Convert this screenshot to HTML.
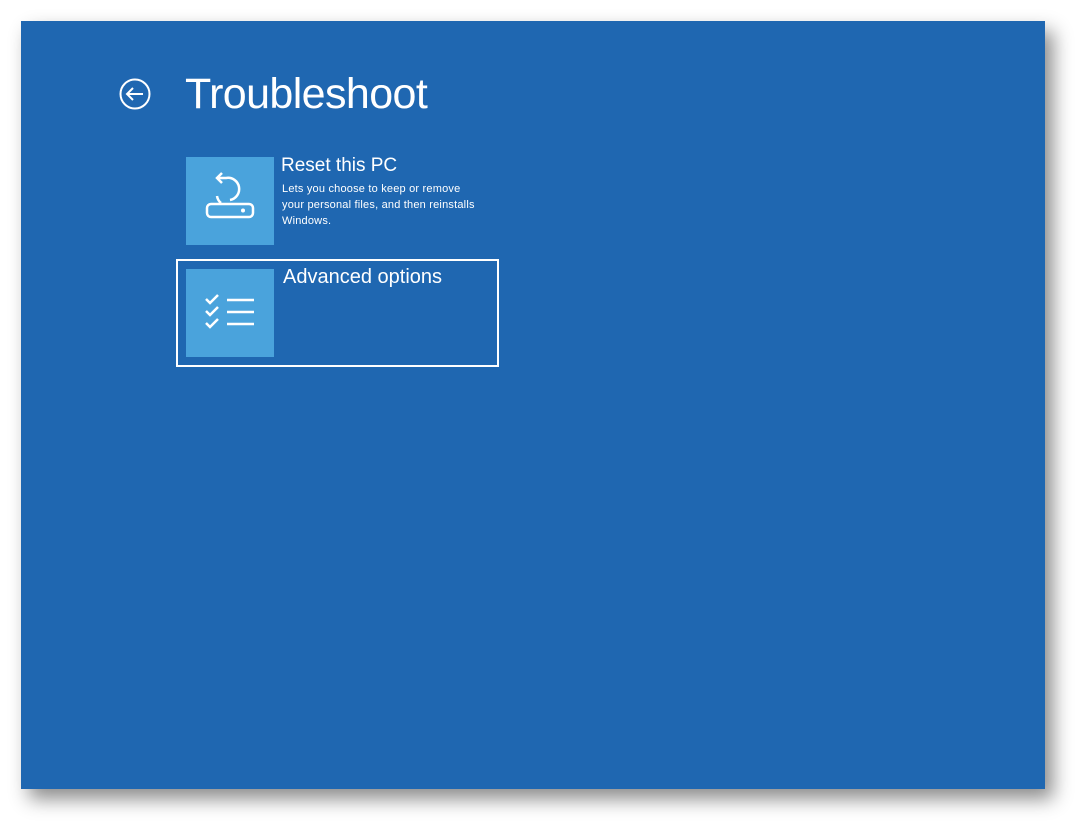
<!DOCTYPE html>
<html><head><style>
html,body{margin:0;padding:0;background:#fff;width:1087px;height:831px;overflow:hidden;font-family:"Liberation Sans",sans-serif;}
.panel{position:absolute;left:21px;top:21px;width:1024px;height:768px;background:#1f67b1;box-shadow:8px 10px 18px rgba(0,0,0,0.45);}
.t{position:absolute;color:#fff;white-space:nowrap;}
.tile{position:absolute;width:88px;height:88px;background:#4aa3dc;}
</style></head><body>
<div class="panel"></div>
<svg style="position:absolute;left:118px;top:77px" width="34" height="34" viewBox="0 0 34 34"><circle cx="17" cy="17" r="14.5" fill="none" stroke="#fff" stroke-width="2"/><path d="M25 17H9M15 11l-6 6 6 6" fill="none" stroke="#fff" stroke-width="2"/></svg>
<div class="t" style="left:185px;top:70px;font-size:43px;letter-spacing:-0.6px;">Troubleshoot</div>
<div class="tile" style="left:186px;top:157px"><svg width="88" height="88" viewBox="0 0 88 88"><g fill="none" stroke="#fff" stroke-width="2.5"><rect x="21" y="47" width="46" height="13" rx="4"/><path d="M31 21H40A11 11 0 0 1 44 43M36 16L31 21L36 26M31 39A11 11 0 0 0 35 46"/></g><circle cx="57" cy="53.5" r="2" fill="#fff"/></svg></div>
<div class="t" style="left:281px;top:155px;font-size:19px;">Reset this PC</div>
<div class="t" style="left:282px;top:181px;font-size:11px;line-height:16px;letter-spacing:0.2px;">Lets you choose to keep or remove<br>your personal files, and then reinstalls<br>Windows.</div>
<div style="position:absolute;left:176px;top:259px;width:319px;height:104px;border:2px solid #fff;"></div>
<div class="tile" style="left:186px;top:269px"><svg width="88" height="88" viewBox="0 0 88 88"><g fill="none" stroke="#fff" stroke-width="2.5"><path d="M20 30l4 4 8-8M20 42l4 4 8-8M20 54l4 4 8-8"/><path d="M41 31h27M41 43h27M41 55h27"/></g></svg></div>
<div class="t" style="left:283px;top:266px;font-size:20px;">Advanced options</div>
</body></html>
